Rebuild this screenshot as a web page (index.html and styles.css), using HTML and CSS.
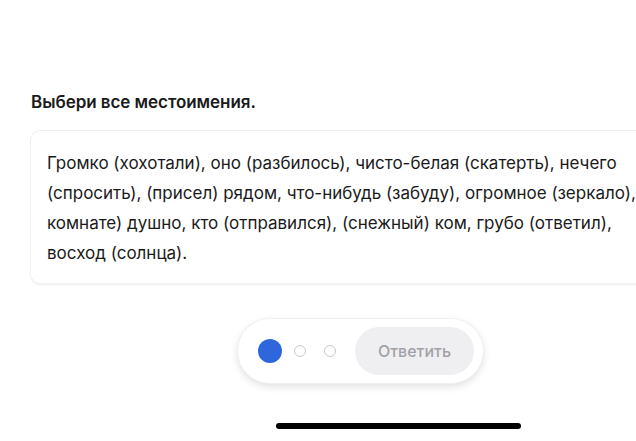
FILE: index.html
```html
<!DOCTYPE html>
<html lang="ru">
<head>
    <meta charset="UTF-8">
    <meta name="viewport" content="width=device-width, initial-scale=1.0">
    <title>Выбери все местоимения</title>
    <link rel="stylesheet" href="styles.css">
</head>
<body>
    <main class="task">
        <h2 class="task-title">Выбери все местоимения.</h2>

        <div class="task-card">
            <p class="task-text">Громко (хохотали), оно (разбилось), чисто-белая (скатерть), нечего<br>(спросить), (присел) рядом, что-нибудь (забуду), огромное (зеркало),<br>комнате) душно, кто (отправился), (снежный) ком, грубо (ответил),<br>восход (солнца).</p>
        </div>

        <div class="controls">
            <div class="steps">
                <span class="step"><span class="dot dot-active"></span></span>
                <span class="step"><span class="dot"></span></span>
                <span class="step"><span class="dot"></span></span>
            </div>
            <button class="answer-button" disabled>Ответить</button>
        </div>
    </main>

    <div class="home-indicator"></div>
</body>
</html>
```

FILE: styles.css
```css
body {
    font-family: 'Inter', 'Noto Sans', sans-serif;
    margin: 0;
    padding: 0;
    background-color: #fff;
    color: #1a1a1a;
    width: 636px;
    height: 441px;
    overflow: hidden;
}

.task {
    padding: 91px 0 0 31px;
}

.task-title {
    margin: 0;
    font-size: 17px;
    line-height: 22px;
    font-weight: 600;
    letter-spacing: -0.05px;
}

.task-card {
    margin-top: 18px;
    width: 680px;
    padding: 17px 16px 15px;
    border-radius: 9px;
    background-color: #fff;
    box-shadow: 0 0 0 1px #f0f0f0, 0 2px 3px rgba(0, 0, 0, 0.08);
}

.task-text {
    margin: 0;
    font-size: 17px;
    line-height: 30px;
    white-space: nowrap;
}

.controls {
    display: flex;
    align-items: center;
    gap: 10px;
    width: max-content;
    margin: 36px 0 0 207px;
    padding: 8px 9px 8px 17px;
    border-radius: 32px;
    background-color: #fff;
    box-shadow: 0 0 0 1px #f0f0f2, 0 3px 8px rgba(0, 0, 0, 0.14);
}

.steps {
    display: flex;
}

.step {
    width: 30px;
    height: 30px;
    display: flex;
    align-items: center;
    justify-content: center;
}

.dot {
    width: 10px;
    height: 10px;
    border-radius: 50%;
    border: 1px solid #c9c9cc;
}

.dot-active {
    width: 24px;
    height: 24px;
    border: none;
    background-color: #2d66dd;
}

.answer-button {
    width: 119px;
    height: 48px;
    border: none;
    border-radius: 24px;
    background-color: #efeff1;
    color: #a2a2a6;
    font-family: inherit;
    font-size: 16px;
    font-weight: 500;
}

.home-indicator {
    width: 245px;
    height: 6px;
    margin: 40px 0 0 276px;
    border-radius: 3px;
    background-color: #000;
}
```
